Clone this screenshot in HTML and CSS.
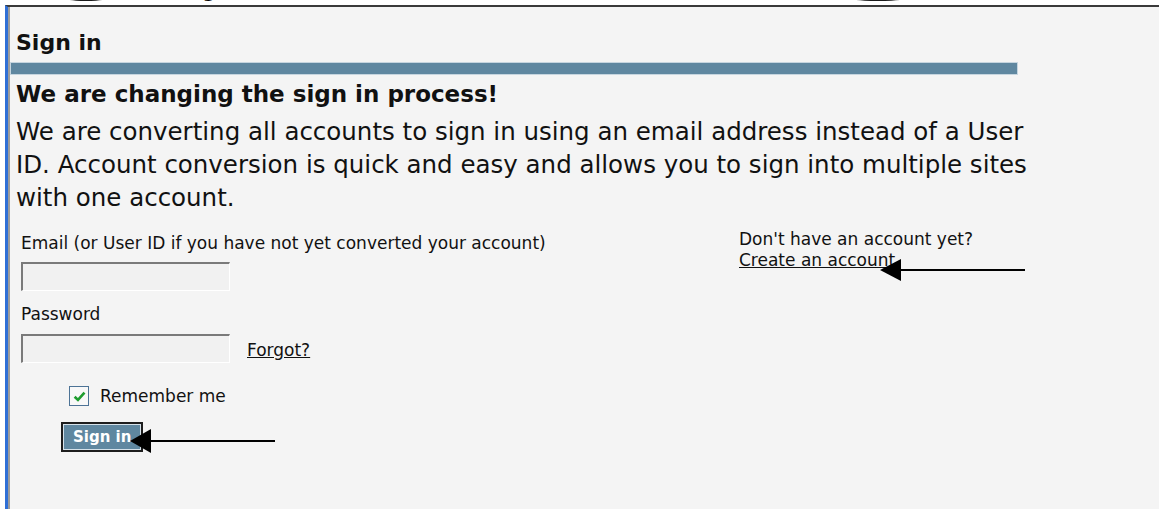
FILE: index.html
```html
<!DOCTYPE html>
<html lang="en">
<head>
<meta charset="utf-8">
<title>Sign in</title>
<link rel="stylesheet" href="styles.css">
</head>
<body>
<div class="top-strip">
  <span class="smudge smudge-a"></span>
  <span class="page-title">Sign in</span>
  <span class="smudge smudge-b"></span>
</div>
<div class="frame">
  <h2 class="frame-title">Sign in</h2>
  <div class="rule"></div>
  <section class="notice">
    <h3 class="notice-head">We are changing the sign in process!</h3>
    <p class="notice-text">We are converting all accounts to sign in using an email address instead of a User ID. Account conversion is quick and easy and allows you to sign into multiple sites with one account.</p>
  </section>
  <div class="form-area">
    <form class="login">
      <label class="field-label" for="email">Email (or User ID if you have not yet converted your account)</label>
      <input class="field" id="email" type="text">
      <label class="field-label" for="pw">Password</label>
      <div class="pw-row">
        <input class="field" id="pw" type="password">
        <a class="link" href="#">Forgot?</a>
      </div>
      <label class="remember">
        <span class="check">
          <svg viewBox="0 0 12 12" width="13" height="13"><path d="M1.5 6.2 L4.6 9.2 L10.6 2.4" fill="none" stroke="#1f9d2f" stroke-width="2.4"/></svg>
        </span>
        <span>Remember me</span>
      </label>
      <button class="submit" type="button">Sign in</button>
    </form>
    <aside class="signup">
      <div>Don't have an account yet?</div>
      <a class="link" href="#">Create an account</a>
    </aside>
  </div>
  <svg class="pointer pointer-signup" viewBox="0 0 146 22" width="146" height="22"><path d="M18 11 H145" stroke="#000" stroke-width="2"/><path d="M0 11 L21 0 L21 22 Z" fill="#000"/></svg>
  <svg class="pointer pointer-submit" viewBox="0 0 146 24" width="146" height="24"><path d="M18 12 H145" stroke="#000" stroke-width="2"/><path d="M0 12 L21 0 L21 24 Z" fill="#000"/></svg>
</div>
</body>
</html>
```
FILE: styles.css
```css
html, body {
  margin: 0;
  background: #fff;
}
body {
  font-family: "DejaVu Sans", "Liberation Sans", sans-serif;
  color: #111;
  height: 509px;
  overflow: hidden;
}

/* clipped heading strip above the panel */
.top-strip {
  height: 5px;
  overflow: hidden;
  position: relative;
  white-space: nowrap;
}
.page-title {
  position: absolute;
  left: 182px;
  top: -23px;
  font: 22px/26px "DejaVu Sans", sans-serif;
  color: #000;
}
.smudge {
  position: absolute;
  top: -8px;
  height: 9px;
  border-radius: 50%;
  background: #1a1a1a;
}
.smudge-a { left: 60px; width: 52px; }
.smudge-b { left: 843px; width: 70px; }

/* main panel */
.frame {
  position: relative;
  margin-left: 5px;
  height: 504px;
  box-sizing: border-box;
  border-left: 3px solid #2f6fd6;
  border-top: 2px solid #3a3a3a;
  background: #f4f4f4;
  box-shadow: inset 2px 0 0 #9c9c9c;
}
.frame-title {
  margin: 0;
  padding: 23px 0 0 8px;
  font-size: 22px;
  line-height: 26px;
  font-weight: bold;
}
.rule {
  margin: 6px 0 0 2px;
  width: 1006px;
  height: 11px;
  background: #5f87a0;
  border: 1px solid #c6d5df;
}
.notice {
  padding: 6px 0 0 8px;
}
.notice-head {
  margin: 0;
  font-size: 23px;
  line-height: 27px;
  font-weight: bold;
}
.notice-text {
  margin: 7px 0 0;
  width: 1045px;
  font-size: 24.5px;
  line-height: 33px;
}

.form-area {
  display: grid;
  grid-template-columns: 718px auto;
  padding: 19px 0 0 13px;
  font-size: 17px;
}
.login {
  display: flex;
  flex-direction: column;
  align-items: flex-start;
  margin: 0;
}
.field-label {
  line-height: 20px;
}
.field {
  box-sizing: border-box;
  width: 209px;
  height: 29px;
  margin: 9px 0 13px;
  padding: 0;
  background: #f1f1f1;
  border-style: solid;
  border-width: 2px 1px 1px 2px;
  border-color: #7a7a7a #fff #fff #7a7a7a;
}
.pw-row {
  display: flex;
  align-items: flex-end;
  gap: 17px;
  margin-top: 1px;
}
.pw-row .field {
  margin-bottom: 0;
}
.link {
  color: #111;
  text-decoration: underline;
  line-height: 20px;
}
.pw-row .link {
  margin-bottom: 3px;
}
.remember {
  display: flex;
  align-items: center;
  gap: 11px;
  margin: 23px 0 0 48px;
  line-height: 19px;
}
.check {
  box-sizing: border-box;
  width: 20px;
  height: 20px;
  border: 1px solid #4d7396;
  background: #f8f8f8;
  display: flex;
  align-items: center;
  justify-content: center;
}
.submit {
  margin: 16px 0 0 40px;
  width: 82px;
  height: 30px;
  box-sizing: border-box;
  border: 2px solid #1d1d1d;
  box-shadow: inset 0 0 0 1px #d6e2ea;
  background: #5f87a0;
  color: #fff;
  font: bold 15px "DejaVu Sans", sans-serif;
  text-align: left;
  padding: 0 0 0 10px;
}
.signup {
  line-height: 21px;
  margin-top: -4px;
}

/* annotation arrows drawn over the form */
.pointer {
  position: absolute;
}
.pointer-signup {
  left: 872px;
  top: 252px;
}
.pointer-submit {
  left: 122px;
  top: 422px;
}
```
